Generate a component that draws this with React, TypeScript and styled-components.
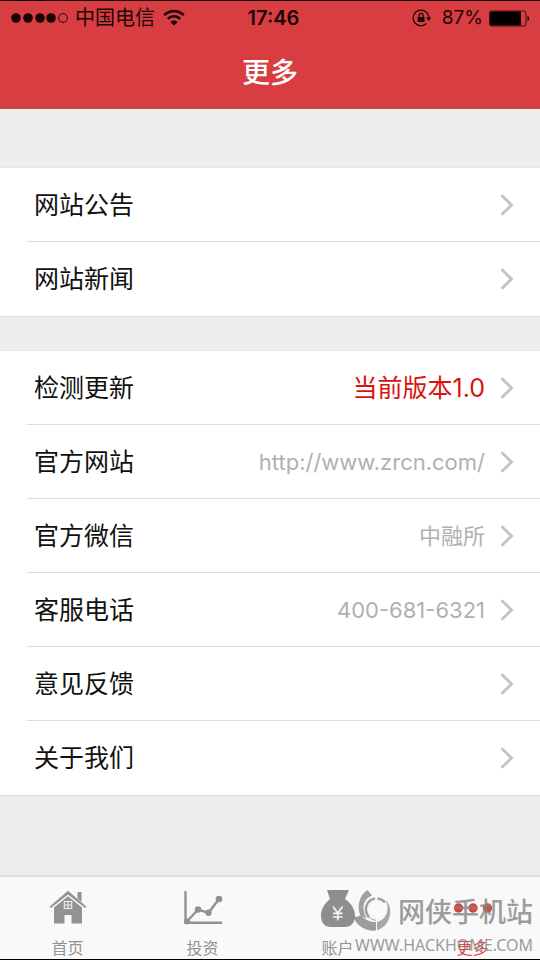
import React from "react";
import styled, { createGlobalStyle } from "styled-components";

const GlobalStyle = createGlobalStyle`
  * { box-sizing: border-box; }
  body {
    margin: 0;
    background: #ededf0;
    font-family: Inter, "Noto Sans CJK SC", sans-serif;
    color: #111;
  }
  button {
    font: inherit;
    color: inherit;
    background: none;
    border: 0;
    margin: 0;
    padding: 0;
    cursor: pointer;
  }
`;

const Screen = styled.div`
  min-height: 100vh;
  display: flex;
  flex-direction: column;
  border-top: 1px solid #1a0304;
  border-bottom: 1px solid #000;
`;

const Header = styled.header`
  background: #d83d41;
  border-bottom: 2px solid #c94543;
`;

const StatusBar = styled.div`
  display: grid;
  grid-template-columns: 1fr auto 1fr;
  align-items: center;
  height: 34px;
  padding: 0 10px 0 11px;
  color: #1c0506;
  font-size: 20px;
  line-height: 34px;
`;

const StatusSide = styled.div<{ $end?: boolean }>`
  display: flex;
  align-items: center;
  justify-content: ${(p) => (p.$end ? "flex-end" : "flex-start")};
  gap: 6px;
`;

const Battery = styled.span`
  display: flex;
  align-items: center;
  gap: 10px;
  font-size: 19px;
`;

const Carrier = styled.span`
  margin-right: 2px;
`;

const Time = styled.time`
  padding-left: 6px;
  font-size: 20px;
  font-weight: 600;
`;

const Title = styled.h1`
  margin: 0;
  height: 72px;
  line-height: 76px;
  text-align: center;
  color: #fff;
  font-size: 28px;
  font-weight: 500;
`;

const Content = styled.main`
  flex: 1;
  display: flex;
  flex-direction: column;
  gap: 33px;
  padding: 58px 0;
`;

const Group = styled.ul`
  list-style: none;
  margin: 0;
  padding: 0;
  background: #fff;
  border-top: 1px solid #e6e6e9;
  border-bottom: 1px solid #dcdcdf;
`;

const Item = styled.li`
  &:not(:last-child) > button::after {
    content: "";
    position: absolute;
    bottom: 0;
    right: 0;
    left: 27px;
    height: 1px;
    background: #dcdcde;
  }
`;

const Row = styled.button`
  position: relative;
  display: flex;
  align-items: center;
  width: 100%;
  height: 74px;
  padding: 0 26px 0 34px;
  text-align: left;
`;

const Label = styled.span`
  flex: 1;
  font-size: 25px;
  line-height: 36px;
`;

const Value = styled.span<{ $tone: "alert" | "muted"; $size: number }>`
  margin-right: 15px;
  color: ${(p) => (p.$tone === "alert" ? "#d8140f" : "#b0b0b0")};
  font-size: ${(p) => p.$size}px;
  line-height: 36px;
`;

const TabBar = styled.nav`
  position: relative;
  display: grid;
  grid-template-columns: repeat(4, 1fr);
  height: 84px;
  background: #f9f9f9;
  border-top: 2px solid #dedee0;
`;

const Tab = styled.button<{ $active?: boolean }>`
  display: flex;
  flex-direction: column;
  align-items: center;
  justify-content: flex-start;
  gap: 6px;
  padding-top: 13px;
  color: ${(p) => (p.$active ? "#dc4a4a" : "#929292")};
  font-size: 16px;
  line-height: 24px;
`;

const TabIcon = styled.span`
  display: flex;
  height: 40px;
`;

const Watermark = styled.div`
  position: absolute;
  right: 7px;
  bottom: 0;
  display: flex;
  flex-direction: column;
  align-items: flex-end;
  color: #858585;
  opacity: 0.8;
  pointer-events: none;
`;

const Brand = styled.div`
  display: flex;
  align-items: flex-end;
  gap: 7px;
`;

const BrandName = styled.span`
  font-size: 27px;
  font-weight: 500;
  line-height: 36px;
`;

const Site = styled.div`
  font-family: "Noto Sans", sans-serif;
  font-size: 16px;
  line-height: 28px;
`;

const SignalIcon = () => (
  <svg width="58" height="12" viewBox="0 0 58 12" fill="currentColor" aria-hidden="true">
    {[5, 17, 29, 40].map((x) => (
      <circle key={x} cx={x} cy="6" r="4.8" />
    ))}
    <circle cx="52" cy="6" r="4.4" fill="none" stroke="currentColor" strokeWidth="0.9" />
  </svg>
);

const WifiIcon = () => (
  <svg width="22" height="19" viewBox="0 0 22 19" fill="none" stroke="currentColor" strokeWidth="2.6" aria-hidden="true">
    <path d="M1.2 6.2C6.6.7 15.4.7 20.8 6.2" />
    <path d="M4.8 9.9c3.4-3.5 9-3.500 12.4 0" />
    <path d="M11 16.6 7.3 13c2-2.1 5.4-2.1 7.4 0z" fill="currentColor" stroke="none" />
  </svg>
);

const LockIcon = () => (
  <svg width="20" height="18" viewBox="0 0 20 18" fill="none" stroke="currentColor" aria-hidden="true">
    <path d="M14.5 14.5A7.8 7.8 0 1 1 16.8 9" strokeWidth="1.2" />
    <path d="M14 8.4h5.4L16.7 12z" fill="currentColor" stroke="none" />
    <rect x="5.7" y="8" width="6.8" height="5" fill="currentColor" stroke="none" />
    <path d="M7 8.3V6.5a2.1 2.1 0 0 1 4.2 0v1.8" strokeWidth="1.2" />
  </svg>
);

const BatteryIcon = () => (
  <svg width="41" height="17" viewBox="0 0 41 17" aria-hidden="true">
    <rect x="0.5" y="1" width="36.5" height="15" rx="2" fill="none" stroke="currentColor" strokeWidth="0.8" />
    <rect x="1" y="1.6" width="31" height="13.8" rx="1" fill="#050000" />
    <path d="M38.5 6c2.3.5 2.3 4.5 0 5z" fill="currentColor" />
  </svg>
);

const Chevron = () => (
  <svg width="14" height="22" viewBox="0 0 14 22" fill="none" stroke="#c3c3c6" strokeWidth="2.8" aria-hidden="true">
    <path d="M1.5 1.2 11.5 11 1.5 20.8" />
  </svg>
);

const HomeIcon = () => (
  <svg width="38" height="40" viewBox="0 0 38 40" fill="#929292" aria-hidden="true">
    <path d="M28.5 2h4v10l-4-3.6z" />
    <path d="M19 .8.5 16.7 1.9 18 19 4.6 36.1 18l1.400-1.300z" />
    <path d="M5 17.500 19 6.300l14 11.200V33.500H22.500V25h-7v8.500H5z" />
    <path d="M15.300 11.500h7.400v7h-7.400zM19 11.500v7M15.300 15h7.400" fill="none" stroke="#f0f0f0" strokeWidth="1.100" />
  </svg>
);

const ChartIcon = () => (
  <svg width="40" height="40" viewBox="0 0 40 40" fill="none" stroke="#929292" strokeWidth="2.4" aria-hidden="true">
    <path d="M2.500 1v31.700H39" />
    <path d="M3.500 32 15 19.500l10.500 3.300L36 9" />
    <g fill="#929292" stroke="none">
      <circle cx="4" cy="31.500" r="3" />
      <circle cx="15" cy="19.500" r="3.200" />
      <circle cx="25.500" cy="22.800" r="3.200" />
      <circle cx="36" cy="9" r="3.300" />
    </g>
  </svg>
);

const MoneyIcon = () => (
  <svg width="36" height="40" viewBox="0 0 36 40" aria-hidden="true">
    <path
      d="M7 0h22L25 9c5.500 3.500 10 10 10 16 0 8.500-4.500 12-10 12H11C5 37 1 33.500 1 25c0-6 4.500-12.500 9-16z"
      fill="#8e8e8e"
    />
    <path d="m13 16.500 4.800 6.500 4.800-6.500M17.800 23v7.500M13 23.300h9.600M13 27h9.600" fill="none" stroke="#f3f3f3" strokeWidth="1.700" />
  </svg>
);

const MoreIcon = () => (
  <svg width="40" height="40" viewBox="0 0 40 40" fill="#dc4340" aria-hidden="true">
    <circle cx="5.500" cy="18" r="4.700" />
    <circle cx="20" cy="18" r="4.700" />
    <circle cx="34.500" cy="18" r="4.700" />
  </svg>
);

const SwirlIcon = () => (
  <svg width="38" height="42" viewBox="0 0 38 42" aria-hidden="true">
    <path d="M14.500 1 19 6.500C13 9 10 14 10.500 20c.3 4 1.500 7 3.500 9.500L7.500 27C3.500 18 6 6.500 14.500 1z" fill="#8b8b8b" />
    <path d="M0 27.500c4 1 6-.5 8-1 4 4 8 6.500 15 6.500v8.500C13 42.500 4 37.500 0 27.500z" fill="#858585" />
    <path d="M24 33c6-1.500 10-6 10.500-13 .2-4-1-7-2.500-9.500 5 4.500 6.500 11 4.500 17.500-2 7-7 12-12.500 13z" fill="#959595" />
    <path d="M22 9.500A11 11 0 0 0 16 28M24.500 9.500c3 .3 5.500 1.700 7.500 4" fill="none" stroke="#8c8c8c" strokeWidth="2.600" />
    <path d="M16 28c2 2 4 3 7 3.300" fill="none" stroke="#8c8c8c" strokeWidth="1" />
  </svg>
);

type Entry = { label: string; value?: string; tone?: "alert" | "muted"; size?: number };

const groups: Entry[][] = [
  [{ label: "网站公告" }, { label: "网站新闻" }],
  [
    { label: "检测更新", value: "当前版本1.0", tone: "alert", size: 25 },
    { label: "官方网站", value: "http://www.zrcn.com/" },
    { label: "官方微信", value: "中融所" },
    { label: "客服电话", value: "400-681-6321" },
    { label: "意见反馈" },
    { label: "关于我们" },
  ],
];

const tabs = [
  { label: "首页", Icon: HomeIcon },
  { label: "投资", Icon: ChartIcon },
  { label: "账户", Icon: MoneyIcon },
  { label: "更多", Icon: MoreIcon, active: true },
];

export default function App() {
  return (
    <>
      <GlobalStyle />
      <Screen>
        <Header>
          <StatusBar>
            <StatusSide>
              <SignalIcon />
              <Carrier>中国电信</Carrier>
              <WifiIcon />
            </StatusSide>
            <Time>17:46</Time>
            <StatusSide $end>
              <Battery>
                <LockIcon />
                <span>87%</span>
              </Battery>
              <BatteryIcon />
            </StatusSide>
          </StatusBar>
          <Title>更多</Title>
        </Header>
        <Content>
          {groups.map((entries, i) => (
            <Group key={i}>
              {entries.map(({ label, value, tone = "muted", size = 22 }) => (
                <Item key={label}>
                  <Row type="button">
                    <Label>{label}</Label>
                    {value && (
                      <Value $tone={tone} $size={size}>
                        {value}
                      </Value>
                    )}
                    <Chevron />
                  </Row>
                </Item>
              ))}
            </Group>
          ))}
        </Content>
        <TabBar>
          {tabs.map(({ label, Icon, active }) => (
            <Tab key={label} type="button" $active={active} aria-current={active ? "page" : undefined}>
              <TabIcon>
                <Icon />
              </TabIcon>
              <span>{label}</span>
            </Tab>
          ))}
          <Watermark>
            <Brand>
              <SwirlIcon />
              <BrandName>网侠手机站</BrandName>
            </Brand>
            <Site>WWW.HACKHOME.COM</Site>
          </Watermark>
        </TabBar>
      </Screen>
    </>
  );
}
